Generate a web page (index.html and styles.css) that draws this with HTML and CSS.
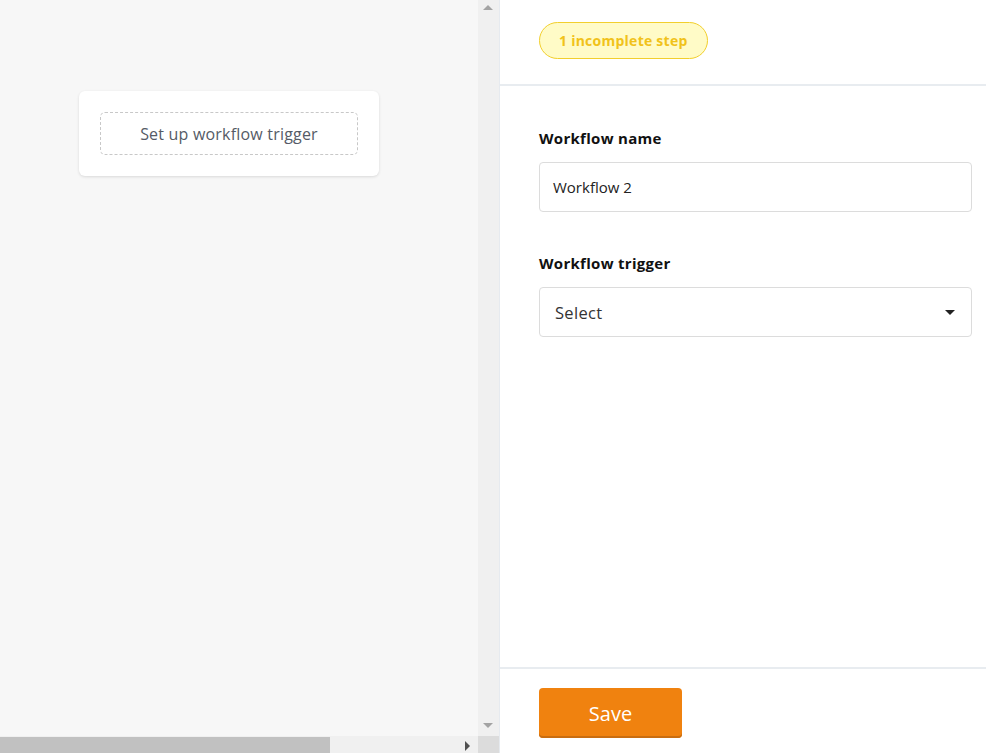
FILE: index.html
```html
<!DOCTYPE html>
<html>
<head>
<meta charset="utf-8">
<link rel="stylesheet" href="styles.css">
</head>
<body>
<div class="app">
  <div class="canvas-wrap">
    <div class="canvas-row">
      <div class="canvas">
        <div class="card">
          <div class="trigger-box">Set up workflow trigger</div>
        </div>
      </div>
      <div class="vscroll">
        <span class="arr-up"></span>
        <span class="arr-down"></span>
      </div>
    </div>
    <div class="hscroll-row">
      <div class="hscroll">
        <div class="hthumb"></div>
        <span class="arr-right"></span>
      </div>
      <div class="corner"></div>
    </div>
  </div>
  <div class="panel">
    <div class="panel-head">
      <span class="badge">1 incomplete step</span>
    </div>
    <div class="panel-body">
      <label class="label">Workflow name</label>
      <div class="input">Workflow 2</div>
      <label class="label label-2">Workflow trigger</label>
      <div class="select">
        <span>Select</span>
        <span class="caret"></span>
      </div>
    </div>
    <div class="panel-foot">
      <button class="save">Save</button>
    </div>
  </div>
</div>
</body>
</html>
```
FILE: styles.css
```css
html, body {
  margin: 0;
  padding: 0;
  height: 100%;
  overflow: hidden;
}
body {
  font-family: "Open Sans", Lato, sans-serif;
  background: #fff;
}
.app {
  display: flex;
  height: 753px;
}
.canvas-wrap {
  width: 499px;
  display: flex;
  flex-direction: column;
  border-right: 1px solid #e6eaef;
}
.canvas-row {
  flex: 1;
  display: flex;
  min-height: 0;
}
.canvas {
  width: 478px;
  background: #f7f7f7;
  padding: 91px 0 0 79px;
  box-sizing: border-box;
}
.card {
  width: 300px;
  height: 85px;
  background: #fff;
  border-radius: 6px;
  box-shadow: 0 1px 3px rgba(0,0,0,0.12);
  padding: 21px;
  box-sizing: border-box;
}
.trigger-box {
  height: 43px;
  border: 1px dashed #c8c8c8;
  border-radius: 5px;
  box-sizing: border-box;
  display: flex;
  align-items: center;
  justify-content: center;
  font-size: 16px;
  letter-spacing: 0.2px;
  color: #555b66;
}
.vscroll {
  width: 21px;
  background: #f0f0f0;
  display: flex;
  flex-direction: column;
  justify-content: space-between;
  align-items: center;
  padding: 5px 0 8px 0;
  box-sizing: border-box;
}
.arr-up {
  width: 0; height: 0;
  border-left: 5px solid transparent;
  border-right: 5px solid transparent;
  border-bottom: 5px solid #a3a3a3;
  margin-right: 2px;
}
.arr-down {
  width: 0; height: 0;
  border-left: 5px solid transparent;
  border-right: 5px solid transparent;
  border-top: 5px solid #a3a3a3;
  margin-right: 2px;
}
.hscroll-row {
  height: 17px;
  display: flex;
}
.hscroll {
  width: 478px;
  background: #f0f0f0;
  display: flex;
  align-items: center;
  justify-content: space-between;
  padding-right: 8px;
  box-sizing: border-box;
}
.hthumb {
  width: 330px;
  height: 16px;
  margin-top: 1px;
  background: #c1c1c1;
}
.arr-right {
  width: 0; height: 0;
  border-top: 5px solid transparent;
  border-bottom: 5px solid transparent;
  border-left: 5px solid #505050;
  margin-top: 2px;
}
.corner {
  width: 21px;
  background: #dcdcdc;
}
.panel {
  flex: 1;
  display: flex;
  flex-direction: column;
}
.panel-head {
  height: 86px;
  border-bottom: 2px solid #e8ecf0;
  padding: 22px 0 0 39px;
  box-sizing: border-box;
}
.badge {
  display: inline-flex;
  align-items: center;
  height: 37px;
  box-sizing: border-box;
  padding: 0 19px;
  border: 1px solid #f2cf2c;
  border-radius: 19px;
  background: #fffbc7;
  color: #f1c21a;
  font-weight: 700;
  font-size: 14px;
  letter-spacing: 0.25px;
}
.panel-body {
  flex: 1;
  padding: 42px 14px 0 39px;
  display: flex;
  flex-direction: column;
}
.label {
  font-size: 15px;
  font-weight: 700;
  letter-spacing: 0.3px;
  color: #111;
  line-height: 20px;
  margin-bottom: 14px;
}
.label-2 {
  margin-top: 41px;
}
.input, .select {
  height: 50px;
  border: 1px solid #dcdcdc;
  border-radius: 4px;
  box-sizing: border-box;
  display: flex;
  align-items: center;
}
.input {
  padding-left: 13px;
  font-size: 15px;
  color: #222;
}
.select {
  padding: 0 16px 0 15px;
  justify-content: space-between;
  font-size: 16.5px;
  letter-spacing: 0.3px;
  color: #333;
}
.caret {
  width: 0; height: 0;
  border-left: 5px solid transparent;
  border-right: 5px solid transparent;
  border-top: 5px solid #222;
}
.panel-foot {
  height: 86px;
  border-top: 2px solid #e8ecf0;
  padding: 19px 0 0 39px;
  box-sizing: border-box;
}
.save {
  width: 143px;
  height: 50px;
  border: none;
  border-radius: 4px;
  background: #f0820f;
  box-shadow: inset 0 -2px 0 #c96d10;
  color: #fff;
  font-family: "Open Sans", Lato, sans-serif;
  font-size: 20px;
  padding: 0;
}
```
